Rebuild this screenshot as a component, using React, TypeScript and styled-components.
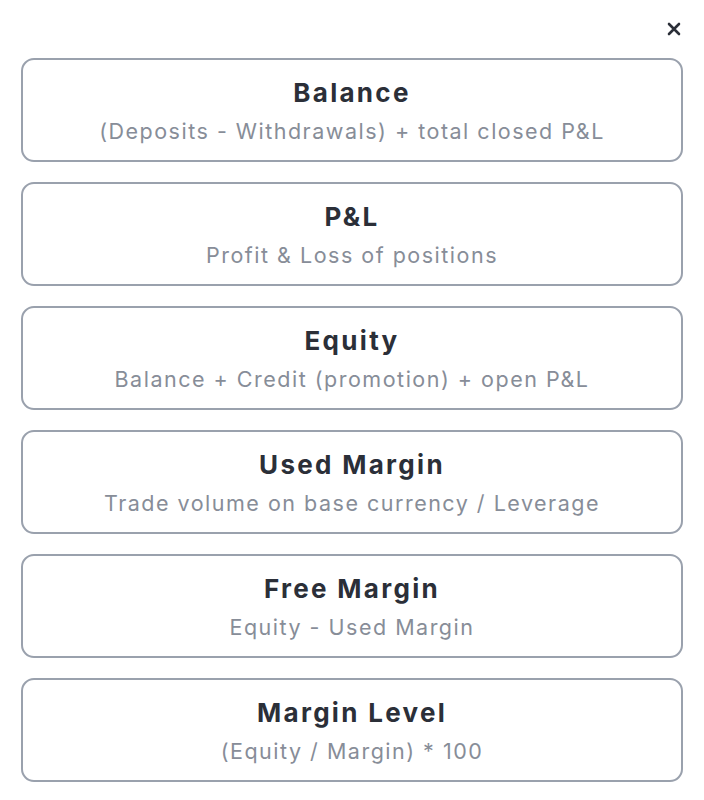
import React from 'react';
import styled, { createGlobalStyle } from 'styled-components';

const GlobalStyle = createGlobalStyle`
  html, body {
    margin: 0;
    padding: 0;
    background: #ffffff;
    font-family: Inter, "Noto Sans", sans-serif;
  }
`;

const Container = styled.div`
  display: flex;
  flex-direction: column;
  padding: 16px 21px 20px 21px;
`;

const Header = styled.div`
  display: flex;
  justify-content: flex-end;
  height: 42px;
  align-items: flex-start;
`;

const CloseButton = styled.button`
  border: none;
  background: none;
  padding: 6px;
  margin-right: -4px;
  cursor: pointer;
  display: flex;
  align-items: center;
  justify-content: center;
`;

const List = styled.div`
  display: flex;
  flex-direction: column;
  gap: 20px;
`;

const Card = styled.div`
  display: flex;
  flex-direction: column;
  align-items: center;
  justify-content: center;
  height: 104px;
  box-sizing: border-box;
  border: 2px solid #9aa1ad;
  border-radius: 13px;
  gap: 10px;
`;

const Title = styled.div`
  font-size: 26px;
  font-weight: 700;
  letter-spacing: 2.3px;
  color: #2b2f38;
  line-height: 31px;
`;

const Subtitle = styled.div`
  font-size: 21.5px;
  font-weight: 400;
  letter-spacing: 1.5px;
  color: #878d98;
  line-height: 26px;
`;

const items = [
  { title: 'Balance', desc: '(Deposits - Withdrawals) + total closed P&L' },
  { title: 'P&L', desc: 'Profit & Loss of positions' },
  { title: 'Equity', desc: 'Balance + Credit (promotion) + open P&L' },
  { title: 'Used Margin', desc: 'Trade volume on base currency / Leverage' },
  { title: 'Free Margin', desc: 'Equity - Used Margin' },
  { title: 'Margin Level', desc: '(Equity / Margin) * 100' },
];

export default function App() {
  return (
    <>
      <GlobalStyle />
      <Container>
        <Header>
          <CloseButton aria-label="Close">
            <svg width="14" height="14" viewBox="0 0 14 14">
              <path d="M2 2 L12 12 M12 2 L2 12" stroke="#2b2f38" strokeWidth="2.6" strokeLinecap="round" />
            </svg>
          </CloseButton>
        </Header>
        <List>
          {items.map((item) => (
            <Card key={item.title}>
              <Title>{item.title}</Title>
              <Subtitle>{item.desc}</Subtitle>
            </Card>
          ))}
        </List>
      </Container>
    </>
  );
}
